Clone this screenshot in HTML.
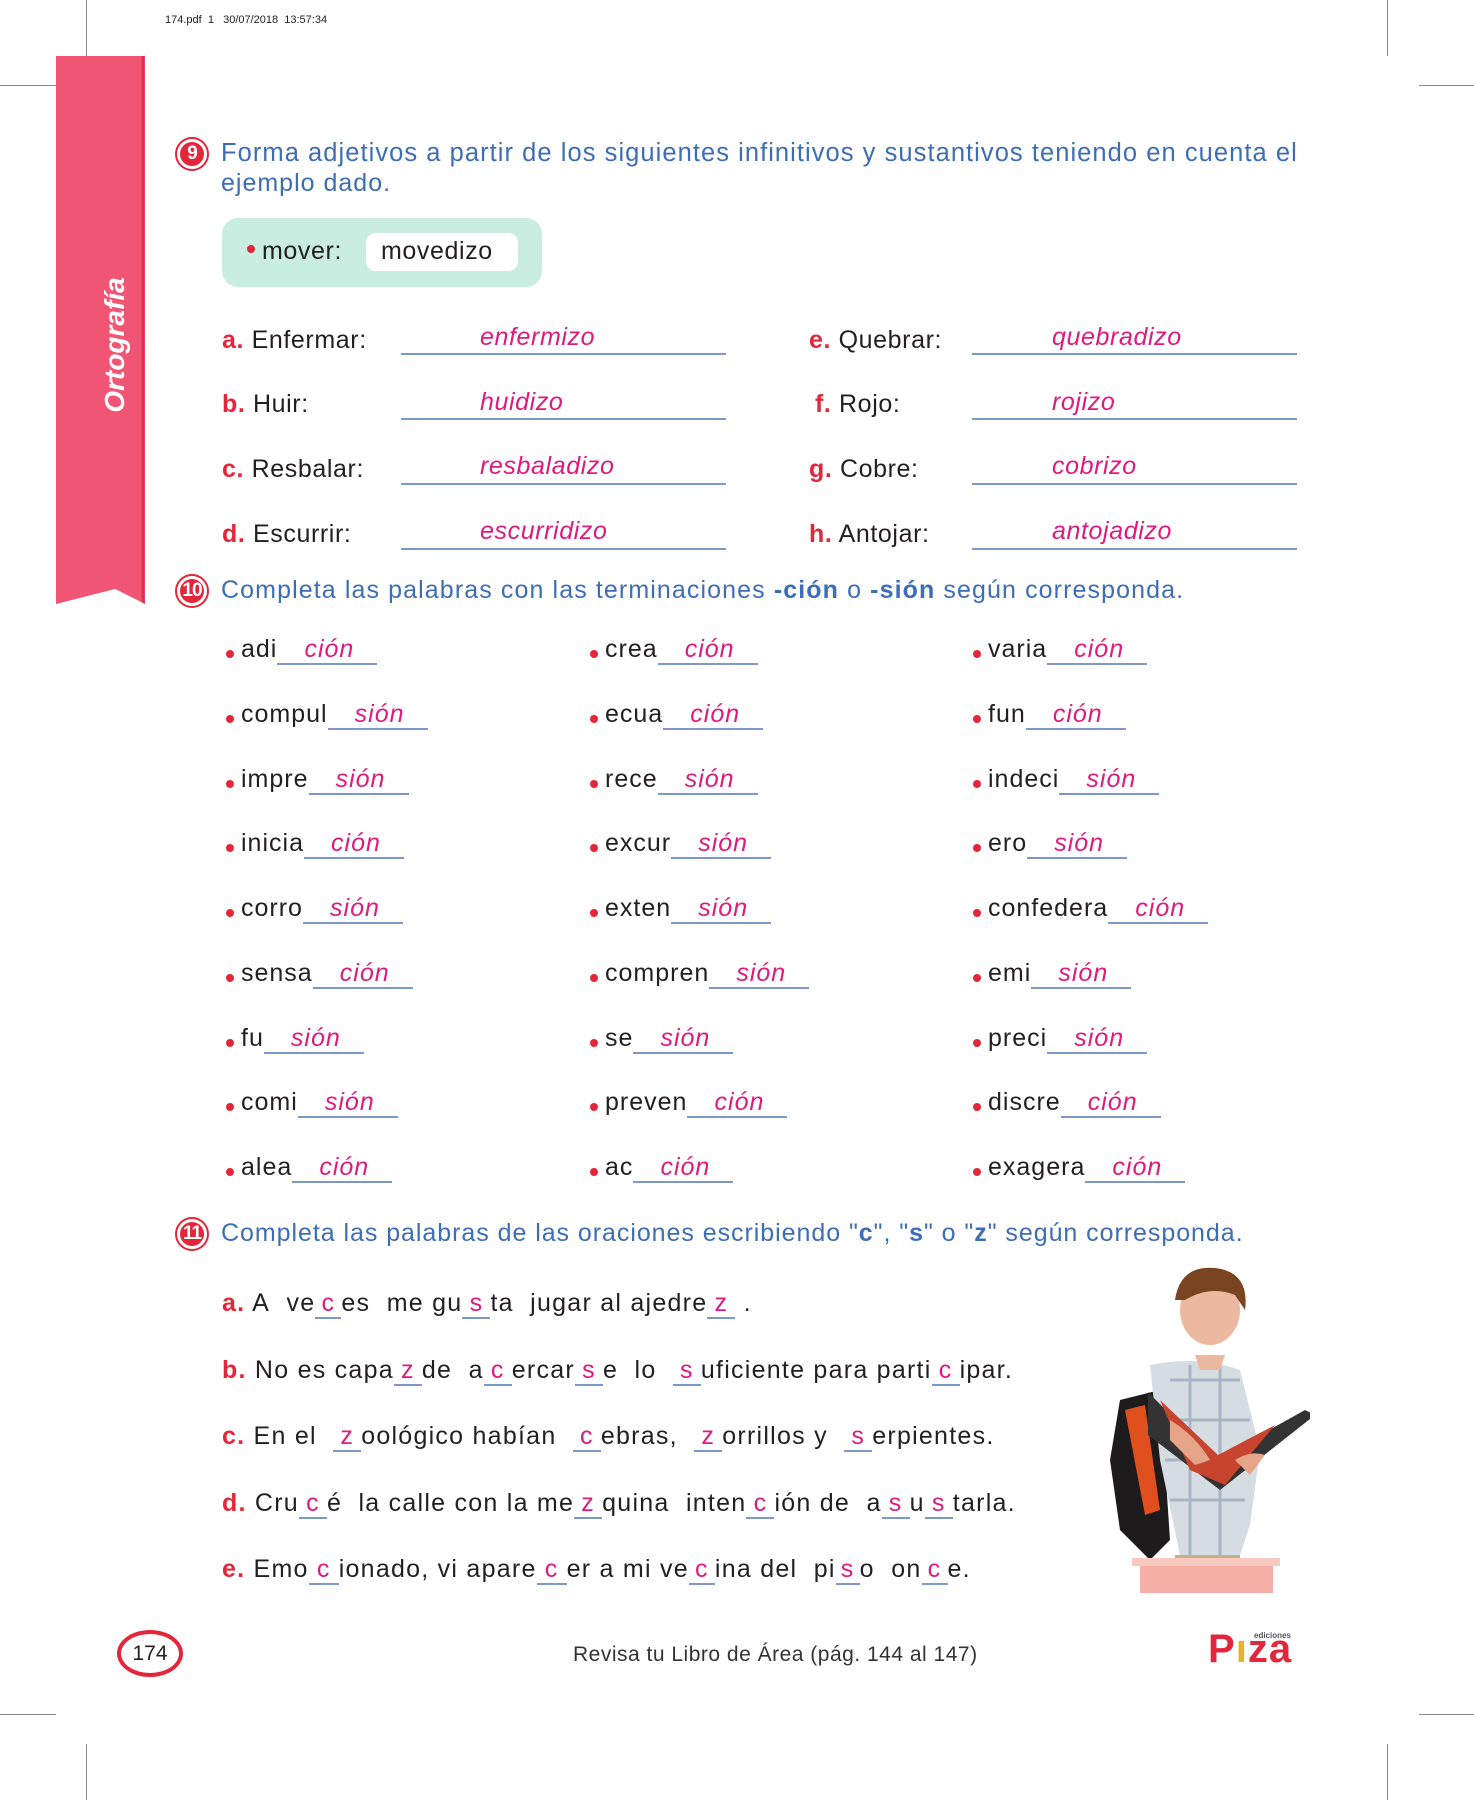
<!DOCTYPE html>
<html><head><meta charset="utf-8"><style>
*{margin:0;padding:0;box-sizing:border-box}
body{width:1474px;height:1800px;background:#fff;position:relative;overflow:hidden;font-family:"Liberation Sans",sans-serif;color:#231f20}
.a{position:absolute;white-space:nowrap}
.t{font-size:25px;letter-spacing:0.6px}
.blue{color:#3d6db4}
.mag{color:#e0197d;font-style:italic}
.lab{color:#e3263a;font-weight:600}
.ln{position:absolute;height:2px;background:#7d98cc}
.num{position:absolute;width:34px;height:34px;border-radius:50%;border:2px solid #e3263a;background:#fff;}
.num span{position:absolute;left:3px;top:3px;width:24px;height:24px;border-radius:50%;background:#e3263a;color:#fff;font-weight:bold;font-size:19px;text-align:center;line-height:24px;letter-spacing:-1px}
.bl{position:absolute;width:8px;height:8px;border-radius:50%;background:#e3263a}
.b{display:inline-block;border-bottom:2px solid #7d98cc;text-align:center;color:#e0197d;line-height:28px}
.s{letter-spacing:1.25px}
.crop{position:absolute;background:#888}
</style></head><body>
<div class="crop" style="left:86px;top:0;width:1px;height:56px"></div>
<div class="crop" style="left:1387px;top:0;width:1px;height:56px"></div>
<div class="crop" style="left:0;top:85px;width:56px;height:1px"></div>
<div class="crop" style="left:1419px;top:85px;width:55px;height:1px"></div>
<div class="crop" style="left:0;top:1714px;width:56px;height:1px"></div>
<div class="crop" style="left:1419px;top:1714px;width:55px;height:1px"></div>
<div class="crop" style="left:86px;top:1744px;width:1px;height:56px"></div>
<div class="crop" style="left:1387px;top:1744px;width:1px;height:56px"></div>
<div class="a" style="left:165px;top:14px;font-size:11px;color:#222">174.pdf&nbsp;&nbsp;1&nbsp;&nbsp;&nbsp;30/07/2018&nbsp;&nbsp;13:57:34</div>

<svg class="a" style="left:56px;top:56px" width="90" height="548"><path d="M0 0H89V548L59 533L0 548Z" fill="#f05674"/><path d="M87 0V548" stroke="#e0314f" stroke-width="3"/><path d="M30 548L59 533L89 548" fill="#fff"/></svg>
<div class="a" style="left:115px;top:345px;transform:translate(-50%,-50%) rotate(-90deg);color:#fff;font-weight:bold;font-style:italic;font-size:28px">Ortografía</div>

<div class="num" style="left:175px;top:137px"><span>9</span></div>
<div class="a t blue" style="left:221px;top:139px;font-size:25.5px;letter-spacing:1.05px">Forma adjetivos a partir de los siguientes infinitivos y sustantivos teniendo en cuenta el</div>
<div class="a t blue" style="left:221px;top:169px;letter-spacing:1px">ejemplo dado.</div>
<div class="a" style="left:222px;top:218px;width:320px;height:69px;background:#c9ede0;border-radius:16px"></div>
<div class="a" style="left:366px;top:233px;width:152px;height:38px;background:#fff;border-radius:10px"></div>
<div class="bl" style="left:247px;top:245px"></div>
<div class="a t" style="left:262px;top:237px">mover:</div>
<div class="a t" style="left:381px;top:237px">movedizo</div>

<div class="a t" style="left:222px;top:326px"><span class="lab">a.</span> Enfermar:</div>
<div class="a t" style="left:222px;top:390px"><span class="lab">b.</span> Huir:</div>
<div class="a t" style="left:222px;top:455px"><span class="lab">c.</span> Resbalar:</div>
<div class="a t" style="left:222px;top:520px"><span class="lab">d.</span> Escurrir:</div>
<div class="a t" style="left:809px;top:326px"><span class="lab">e.</span> Quebrar:</div>
<div class="a t" style="left:815px;top:390px"><span class="lab">f.</span> Rojo:</div>
<div class="a t" style="left:809px;top:455px"><span class="lab">g.</span> Cobre:</div>
<div class="a t" style="left:809px;top:520px"><span class="lab">h.</span> Antojar:</div>
<div class="ln" style="left:401px;top:353px;width:325px"></div>
<div class="ln" style="left:401px;top:418px;width:325px"></div>
<div class="ln" style="left:401px;top:483px;width:325px"></div>
<div class="ln" style="left:401px;top:548px;width:325px"></div>
<div class="ln" style="left:972px;top:353px;width:325px"></div>
<div class="ln" style="left:972px;top:418px;width:325px"></div>
<div class="ln" style="left:972px;top:483px;width:325px"></div>
<div class="ln" style="left:972px;top:548px;width:325px"></div>
<div class="a t mag" style="left:480px;top:323px">enfermizo</div>
<div class="a t mag" style="left:480px;top:388px">huidizo</div>
<div class="a t mag" style="left:480px;top:452px">resbaladizo</div>
<div class="a t mag" style="left:480px;top:517px">escurridizo</div>
<div class="a t mag" style="left:1052px;top:323px">quebradizo</div>
<div class="a t mag" style="left:1052px;top:388px">rojizo</div>
<div class="a t mag" style="left:1052px;top:452px">cobrizo</div>
<div class="a t mag" style="left:1052px;top:517px">antojadizo</div>

<div class="num" style="left:175px;top:574px"><span>10</span></div>
<div class="a t blue" style="left:221px;top:576px;letter-spacing:1.1px">Completa las palabras con las terminaciones <b>-ción</b> o <b>-sión</b> según corresponda.</div>

<div id="q10"></div>

<div class="num" style="left:175px;top:1217px"><span>11</span></div>
<div class="a t blue" style="left:221px;top:1219px;letter-spacing:0.95px">Completa las palabras de las oraciones escribiendo "<b>c</b>", "<b>s</b>" o "<b>z</b>" según corresponda.</div>

<div class="a t s" style="left:222px;top:1289px"><span class="lab">a.</span> A&nbsp; ve<span class="b" style="width:26px">c</span>es&nbsp; me gu<span class="b" style="width:28px">s</span>ta&nbsp; jugar al ajedre<span class="b" style="width:28px">z</span> .</div>
<div class="a t s" style="left:222px;top:1356px"><span class="lab">b.</span> No es capa<span class="b" style="width:28px">z</span>de&nbsp; a<span class="b" style="width:28px">c</span>ercar<span class="b" style="width:28px">s</span>e&nbsp; lo&nbsp; <span class="b" style="width:28px">s</span>uficiente para parti<span class="b" style="width:28px">c</span>ipar.</div>
<div class="a t s" style="left:222px;top:1422px"><span class="lab">c.</span> En el&nbsp; <span class="b" style="width:28px">z</span>oológico habían&nbsp; <span class="b" style="width:28px">c</span>ebras,&nbsp; <span class="b" style="width:28px">z</span>orrillos y&nbsp; <span class="b" style="width:28px">s</span>erpientes.</div>
<div class="a t s" style="left:222px;top:1489px"><span class="lab">d.</span> Cru<span class="b" style="width:28px">c</span>é&nbsp; la calle con la me<span class="b" style="width:28px">z</span>quina&nbsp; inten<span class="b" style="width:28px">c</span>ión de&nbsp; a<span class="b" style="width:28px">s</span>u<span class="b" style="width:28px">s</span>tarla.</div>
<div class="a t s" style="left:222px;top:1555px"><span class="lab">e.</span> Emo<span class="b" style="width:30px">c</span>ionado, vi apare<span class="b" style="width:30px">c</span>er a mi ve<span class="b" style="width:26px">c</span>ina del&nbsp; pi<span class="b" style="width:24px">s</span>o&nbsp; on<span class="b" style="width:26px">c</span>e.</div>

<svg class="a" style="left:1100px;top:1260px" width="210" height="340">
<path d="M20 140L60 130L70 280L50 300L20 270L10 200Z" fill="#1d1b1c"/>
<path d="M25 150L45 145L60 250L45 255Z" fill="#e0501e"/>
<path d="M50 105Q100 95 140 110L160 190L150 265L140 295L80 295L60 200Z" fill="#d5dde3"/>
<path d="M70 120L140 120M65 160L150 160M65 200L150 200M70 240L145 240M90 105L90 295M120 105L120 295" stroke="#a9b5c6" stroke-width="3"/>
<path d="M75 295H140V315H75Z" fill="#c5ad8c"/>
<path d="M48 132L115 200L205 150L215 155L120 230L48 175Z" fill="#333"/>
<path d="M60 140L118 195L175 165L125 225L90 210Z" fill="#c8442f"/>
<path d="M70 160Q95 175 110 200L95 205L70 180Z" fill="#e6a489"/>
<path d="M135 200Q150 190 165 195L150 215Z" fill="#e6a489"/>
<ellipse cx="110" cy="50" rx="30" ry="35" fill="#ecb89f"/>
<path d="M75 40Q80 5 115 8Q150 12 145 50L135 35Q110 25 85 40Z" fill="#7a4421"/>
<path d="M95 95L125 95L120 110L100 110Z" fill="#ecb89f"/>
<path d="M32 298H180V306H32Z" fill="#f7c9bf"/>
<path d="M40 306H173V333H40Z" fill="#f6b0a8"/>
</svg>

<div class="a" style="left:117px;top:1630px;width:66px;height:47px;border:4px solid #e3263a;border-radius:50%;text-align:center;font-size:21px;line-height:39px">174</div>
<div class="a" style="left:573px;top:1643px;font-size:21px;color:#333;letter-spacing:0.5px">Revisa tu Libro de Área (pág. 144 al 147)</div>
<div class="a" style="left:1254px;top:1631px;font-size:8px;font-weight:bold;color:#555">ediciones</div>
<div class="a" style="left:1208px;top:1627px;font-size:40px;font-weight:bold;color:#e3263a;letter-spacing:1px;line-height:44px">P<span style="color:#e9b22a">ı</span>za</div>

<script>
var cols=[[226,[["adi","ción"],["compul","sión"],["impre","sión"],["inicia","ción"],["corro","sión"],["sensa","ción"],["fu","sión"],["comi","sión"],["alea","ción"]]],
[590,[["crea","ción"],["ecua","ción"],["rece","sión"],["excur","sión"],["exten","sión"],["compren","sión"],["se","sión"],["preven","ción"],["ac","ción"]]],
[973,[["varia","ción"],["fun","ción"],["indeci","sión"],["ero","sión"],["confedera","ción"],["emi","sión"],["preci","sión"],["discre","ción"],["exagera","ción"]]]];
var h="";
cols.forEach(function(c){c[1].forEach(function(w,i){var y=652+i*64.75;
h+='<div class="bl" style="left:'+c[0]+'px;top:'+(y-2)+'px"></div>';
h+='<div class="a t" style="left:'+(c[0]+15)+'px;top:'+(y-17)+'px;letter-spacing:1px">'+w[0]+'<span class="b mag" style="width:100px;padding-left:4px">'+w[1]+'</span></div>';});});
document.getElementById("q10").outerHTML=h;
</script>
</body></html>
